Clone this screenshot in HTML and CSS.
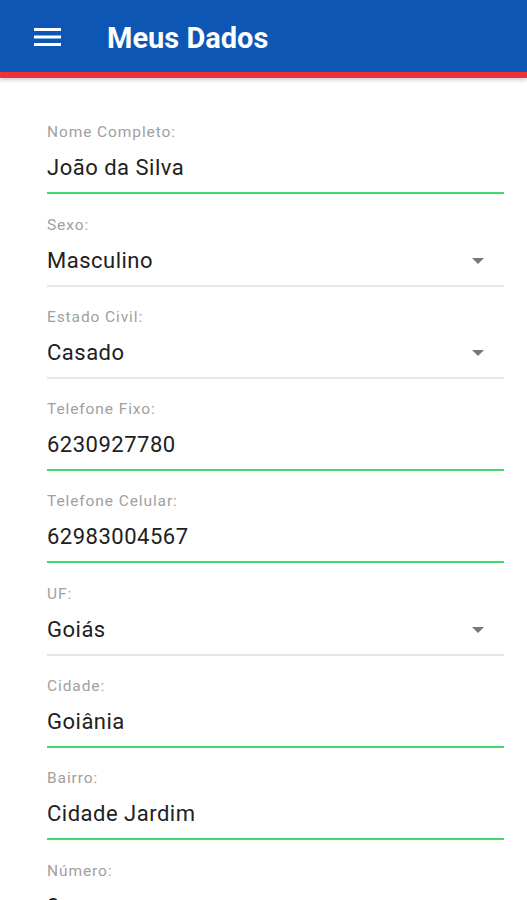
FILE: index.html
```html
<!DOCTYPE html>
<html lang="pt">
<head>
    <meta charset="UTF-8">
    <meta name="viewport" content="width=device-width, initial-scale=1.0">
    <title>Meus Dados</title>
    <link rel="stylesheet" href="styles.css">
</head>
<body>
    <header class="topbar">
        <span class="menu-icon">
            <svg width="27" height="20" viewBox="0 0 27 20">
                <rect x="0" y="1" width="27" height="3" fill="#fff"/>
                <rect x="0" y="8.5" width="27" height="3" fill="#fff"/>
                <rect x="0" y="16" width="27" height="3" fill="#fff"/>
            </svg>
        </span>
        <h1>Meus Dados</h1>
    </header>

    <main class="form">
        <div class="field">
            <label>Nome Completo:</label>
            <div class="value">João da Silva</div>
        </div>
        <div class="field select">
            <label>Sexo:</label>
            <div class="value">Masculino <span class="caret"></span></div>
        </div>
        <div class="field select">
            <label>Estado Civil:</label>
            <div class="value">Casado <span class="caret"></span></div>
        </div>
        <div class="field">
            <label>Telefone Fixo:</label>
            <div class="value">6230927780</div>
        </div>
        <div class="field">
            <label>Telefone Celular:</label>
            <div class="value">62983004567</div>
        </div>
        <div class="field select">
            <label>UF:</label>
            <div class="value">Goiás <span class="caret"></span></div>
        </div>
        <div class="field">
            <label>Cidade:</label>
            <div class="value">Goiânia</div>
        </div>
        <div class="field">
            <label>Bairro:</label>
            <div class="value">Cidade Jardim</div>
        </div>
        <div class="field">
            <label>Número:</label>
            <div class="value">2</div>
        </div>
    </main>
</body>
</html>
```

FILE: styles.css
```css
body {
    margin: 0;
    padding: 0;
    background-color: #fff;
    font-family: Roboto, "Liberation Sans", Arial, sans-serif;
    color: #212121;
    overflow: hidden;
}
.topbar {
    height: 72px;
    background-color: #0d56b4;
    border-bottom: 6px solid #f2303a;
    box-shadow: 0 2px 4px rgba(0, 0, 0, 0.2);
    display: flex;
    align-items: center;
    padding-left: 34px;
}
.menu-icon {
    display: flex;
    width: 27px;
    height: 20px;
    margin-top: 2px;
}
.topbar h1 {
    margin: 3px 0 0 46px;
    color: #fff;
    font-size: 29px;
    font-weight: 700;
}
.form {
    padding: 24px 23px 0 47px;
}
.field {
    margin-top: 20.3px;
    border-bottom: 2px solid #40d870;
    padding-bottom: 10px;
}
.field.select {
    border-bottom-color: #e6e6e6;
}
.field label {
    display: block;
    font-size: 15.5px;
    line-height: 20px;
    letter-spacing: 0.9px;
    color: #a0a0a0;
    margin-bottom: 12px;
}
.field .value {
    font-size: 22px;
    line-height: 28px;
    letter-spacing: 0.5px;
    display: flex;
    align-items: center;
    justify-content: space-between;
}
.caret {
    width: 0;
    height: 0;
    border-left: 6px solid transparent;
    border-right: 6px solid transparent;
    border-top: 6px solid #777;
    margin-right: 20px;
}
```
